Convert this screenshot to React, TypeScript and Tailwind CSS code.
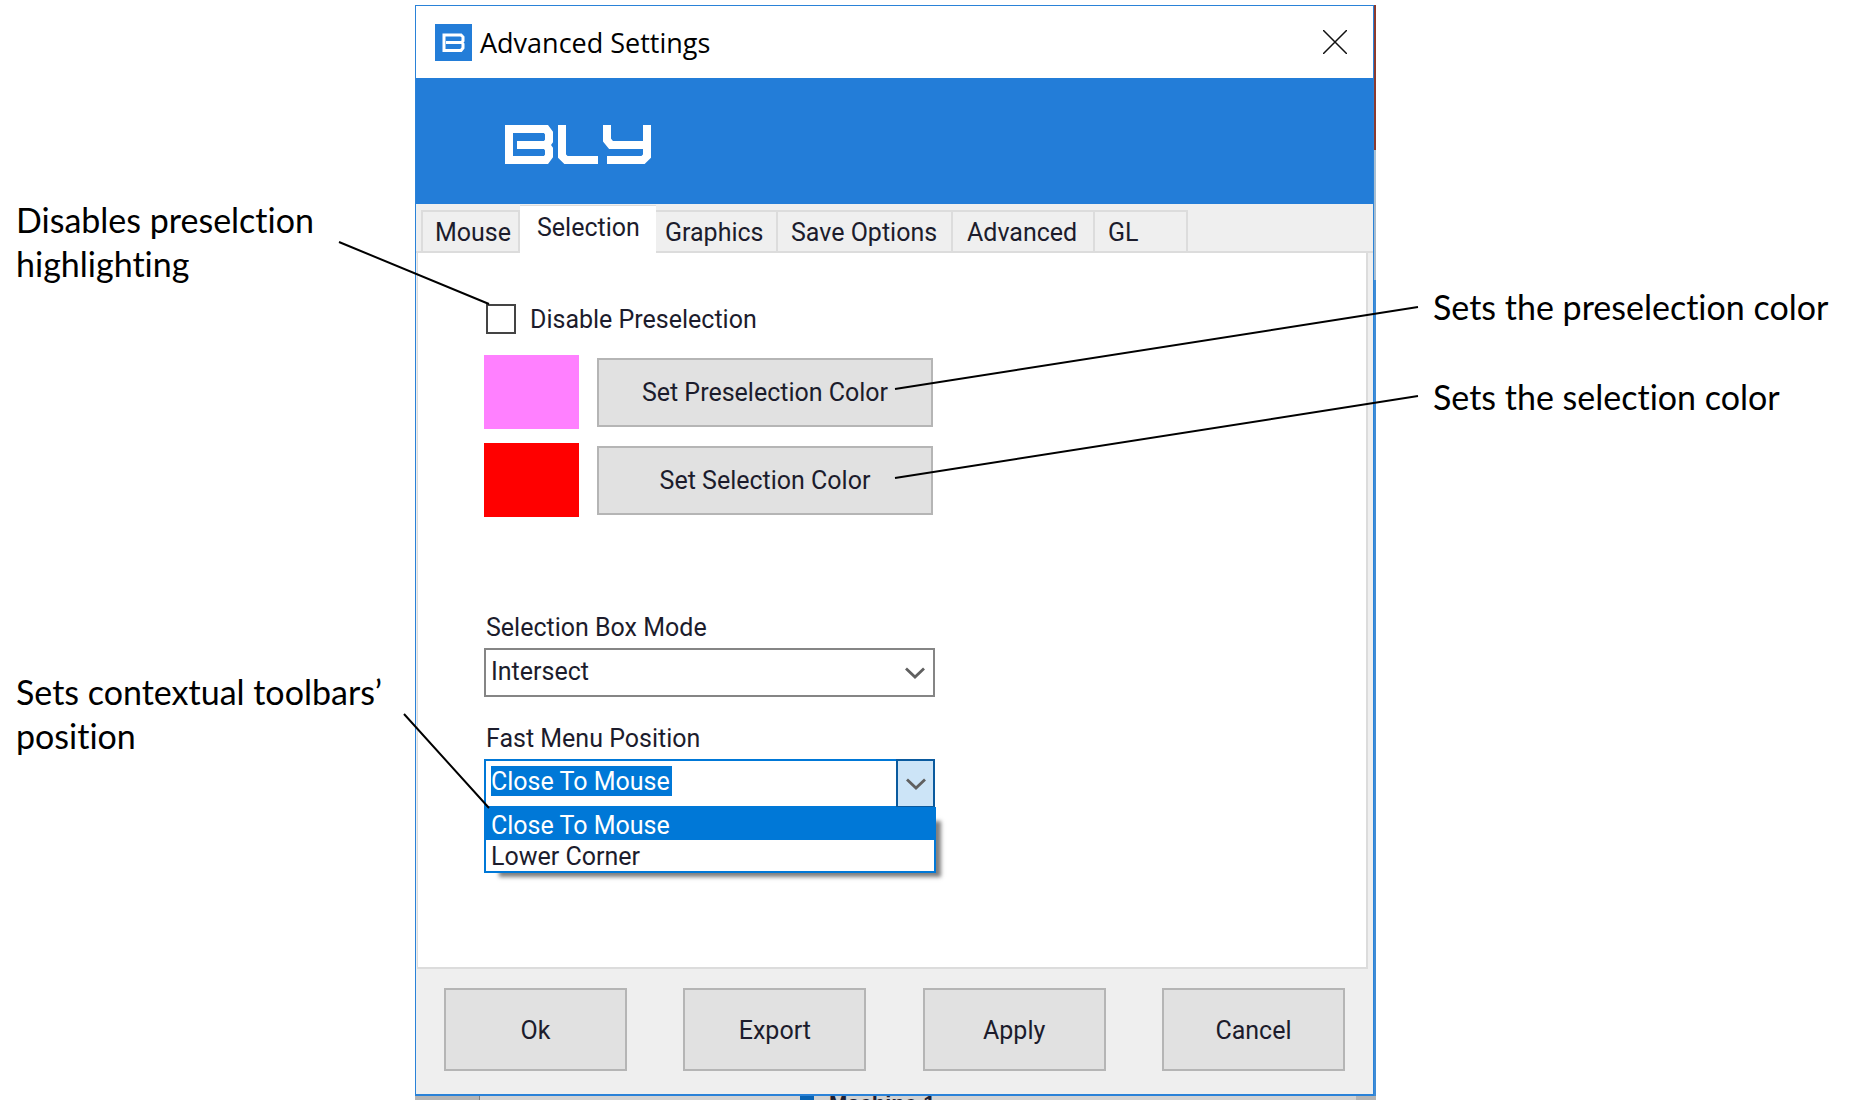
import clsx from "clsx";
import { useState } from "react";

const tabs = [
    { name: "Mouse", width: "w-[99px]", pad: "pl-[12px]" },
    { name: "Selection", width: "w-[136px]", pad: "pl-[17px]" },
    { name: "Graphics", width: "w-[122px]", pad: "pl-[9px]" },
    { name: "Save Options", width: "w-[175px]", pad: "pl-[13px]" },
    { name: "Advanced", width: "w-[142px]", pad: "pl-[14px]" },
    { name: "GL", width: "w-[93px]", pad: "pl-[13px]" },
];

const menuPositions = ["Close To Mouse", "Lower Corner"];

const BlyMark = ({ className }: { className?: string }): JSX.Element => (
    <svg viewBox="0 0 37 37" className={className} aria-hidden="true">
        <rect width="37" height="37" fill="#237dd8" />
        <path
            d="M11 18.500H27M9 11H26L28 13V17L26.500 18.500L28 20V24L26 26.500H9V9.500"
            fill="none"
            stroke="#fff"
            strokeWidth="3"
        />
    </svg>
);

const BlyLogo = ({ className }: { className?: string }): JSX.Element => (
    <svg viewBox="0 0 146 39" className={className} role="img" aria-label="BLY">
        <g fill="none" stroke="#fff" strokeWidth="8">
            <path d="M12 20H44M4 4H41L44 8V16L41 20L44 24V31L41 35H4V0" />
            <path d="M57 0V31L61 35H93" />
            <path d="M102 0V15L106 20H142M142 0V31L138 35H102" />
        </g>
    </svg>
);

const Chevron = ({ className }: { className?: string }): JSX.Element => (
    <svg viewBox="0 0 20 12" className={clsx("w-[20px] h-[12px]", className)} aria-hidden="true">
        <path d="M1 1.500L10 10L19 1.500" fill="none" stroke="#606060" strokeWidth="2.800" />
    </svg>
);

const PushButton = ({ className, label }: { className?: string; label: string }): JSX.Element => (
    <button type="button" className={clsx("border-2 border-[#b5b5b5] bg-[#e1e1e1] text-center pt-[2px]", className)}>
        {label}
    </button>
);

const ColorRow = ({ swatch, label }: { swatch: string; label: string }): JSX.Element => (
    <div className="flex items-center gap-[18px]">
        <div className={clsx("w-[95px] h-[74px]", swatch)} />
        <PushButton className="w-[336px] h-[69px]" label={label} />
    </div>
);

const TabStrip = ({ active, onSelect }: { active: string; onSelect: (name: string) => void }): JSX.Element => (
    <div role="tablist" className="flex items-end h-[49px] pl-[5px] bg-[#efefef] border-b-2 border-[#dcdcdc]">
        {tabs.map(tab => (
            <button
                key={tab.name}
                type="button"
                role="tab"
                aria-selected={tab.name === active}
                onClick={() => onSelect(tab.name)}
                className={clsx(
                    "text-left whitespace-nowrap border-[#dcdcdc]",
                    tab.width,
                    tab.pad,
                    tab.name === active
                        ? "h-[48px] -mb-[2px] pb-[4px] bg-white border-t"
                        : "h-[41px] pt-[2px] border-t-2 border-r-2 first:border-l-2"
                )}
            >
                {tab.name}
            </button>
        ))}
    </div>
);

const SelectionPanel = (): JSX.Element => {
    const [disabled, setDisabled] = useState(false);
    const [mode, setMode] = useState("Intersect");
    const [position, setPosition] = useState(menuPositions[0]);

    return (
        <div className="ml-[1px] mr-[5px] h-[716px] bg-white border-l border-r-2 border-b-2 border-[#dcdcdc] pl-[66px] pt-[50px]">
            <label className="flex items-center gap-[14px] h-[32px] pl-[2px]">
                <input
                    type="checkbox"
                    checked={disabled}
                    onChange={e => setDisabled(e.target.checked)}
                    className="appearance-none w-[30px] h-[30px] border-2 border-[#444444] bg-white checked:bg-[#0078d7]"
                />
                <span className="pt-[2px]">Disable Preselection</span>
            </label>
            <div className="flex flex-col gap-[14px] mt-[20px]">
                <ColorRow swatch="bg-[#ff80ff]" label="Set Preselection Color" />
                <ColorRow swatch="bg-[#ff0000]" label="Set Selection Color" />
            </div>

            <div className="w-[451px] mt-[96px]">
                <label htmlFor="box-mode" className="block h-[35px] pl-[2px]">
                    Selection Box Mode
                </label>
                <div className="relative">
                    <select
                        id="box-mode"
                        value={mode}
                        onChange={e => setMode(e.target.value)}
                        className="appearance-none block w-full h-[49px] border-2 border-[#858585] bg-white pl-[5px] pb-[2px]"
                    >
                        <option>Intersect</option>
                        <option>Contain</option>
                    </select>
                    <Chevron className="absolute right-[10px] top-[19px] pointer-events-none" />
                </div>

                <label htmlFor="menu-position" className="block h-[35px] mt-[27px] pl-[2px]">
                    Fast Menu Position
                </label>
                <div className="relative">
                    <div className="flex h-[49px] border-2 border-[#0078d7]">
                        <div className="flex-grow pl-[5px] pt-[5px]">
                            <input
                                id="menu-position"
                                type="text"
                                role="combobox"
                                aria-expanded="true"
                                aria-controls="menu-position-list"
                                value={position}
                                readOnly
                                className="field-sizing-content block h-[30px] pt-[2px] pr-[2px] bg-[#0078d7] text-white outline-none"
                            />
                        </div>
                        <button
                            type="button"
                            aria-label="Toggle list"
                            className="grid place-items-center w-[39px] -m-[2px] border-2 border-[#0a5a9e] bg-[#cce4f7]"
                        >
                            <Chevron />
                        </button>
                    </div>
                    <ul
                        id="menu-position-list"
                        role="listbox"
                        className="absolute left-0 top-[48px] w-[452px] border-2 border-[#0078d7] bg-white shadow-[10px_9px_4px_-5px_rgba(0,0,0,0.5)]"
                    >
                        {menuPositions.map(item => (
                            <li
                                key={item}
                                role="option"
                                aria-selected={item === position}
                                onClick={() => setPosition(item)}
                                className={clsx(
                                    "h-[31px] leading-[33px] pl-[5px]",
                                    item === position && "bg-[#0078d7] text-white"
                                )}
                            >
                                {item}
                            </li>
                        ))}
                    </ul>
                </div>
            </div>
        </div>
    );
};

const SettingsDialog = (): JSX.Element => {
    const [tab, setTab] = useState("Selection");

    return (
        <section
            aria-label="Advanced Settings"
            className="flex-grow border border-b-2 border-[#2a82d8] bg-[#efefef] font-[Roboto,'Liberation_Sans',sans-serif] text-[25px] leading-[30px] text-[#1c1c2c]"
        >
            <header className="flex items-center h-[72px] pl-[19px] pr-[26px] bg-white">
                <BlyMark className="w-[37px] h-[37px]" />
                <h1 className="ml-[8px] pt-[2px] flex-grow font-['Open_Sans',sans-serif] text-[27px] text-black">
                    Advanced Settings
                </h1>
                <button type="button" aria-label="Close">
                    <svg viewBox="0 0 24 24" className="w-[24px] h-[24px]">
                        <path d="M0 0L24 24M24 0L0 24" stroke="#111" strokeWidth="1.500" />
                    </svg>
                </button>
            </header>
            <div className="h-[126px] bg-[#237dd8] pl-[89px] pt-[47px]">
                <BlyLogo className="w-[146px] h-[39px]" />
            </div>
            <TabStrip active={tab} onSelect={setTab} />
            <SelectionPanel />
            <footer className="flex justify-between pt-[19px] pb-[23px] pl-[28px] pr-[28px]">
                <PushButton className="w-[183px] h-[83px]" label="Ok" />
                <PushButton className="w-[183px] h-[83px]" label="Export" />
                <PushButton className="w-[183px] h-[83px]" label="Apply" />
                <PushButton className="w-[183px] h-[83px]" label="Cancel" />
            </footer>
        </section>
    );
};

// Slivers of the application window that show behind the dialog
const BehindRight = (): JSX.Element => (
    <div className="w-[2px] flex flex-col">
        <div className="h-[145px] bg-[#8b3a2e]" />
        <div className="h-[130px] bg-[#a9bfd2]" />
        <div className="flex-grow bg-[#3f8cd6]" />
    </div>
);

const BehindBottom = (): JSX.Element => (
    <div className="flex h-[4px] overflow-hidden bg-[#d2d2d2] font-['Liberation_Sans',sans-serif] text-[22px] leading-[16px] text-[#202030]">
        <div className="w-[65px] bg-[#b4b4b4] border-r border-[#808080]" />
        <div className="w-[320px]" />
        <div className="w-[14px] bg-[#0a64b4]" />
        <span className="flex-grow pl-[15px] font-bold">Machine 1</span>
        <div className="w-[20px] bg-[#b4b4b4]" />
    </div>
);

export default function App(): JSX.Element {
    return (
        <main className="relative grid grid-cols-[415fr_961fr_483fr] bg-white font-[Lato,sans-serif] text-[34px] leading-[44px] text-black [font-variant-ligatures:none] pb-[4px]">
            <aside className="pl-[16px] pt-[198px]">
                <p>
                    Disables preselction
                    <br />
                    highlighting
                </p>
                <p className="mt-[384px]">
                    Sets contextual toolbars’
                    <br />
                    position
                </p>
            </aside>
            <div className="pt-[5px]">
                <div className="flex">
                    <SettingsDialog />
                    <BehindRight />
                </div>
                <BehindBottom />
            </div>
            <aside className="pl-[57px] pt-[285px] whitespace-nowrap">
                <p>Sets the preselection color</p>
                <p className="mt-[46px]">Sets the selection color</p>
            </aside>
            <svg
                viewBox="0 0 1859 1103"
                className="absolute left-0 top-0 w-full pointer-events-none"
                aria-hidden="true"
            >
                <path
                    d="M339 242L489 304M404 714L489 808M1418 307L895 389M1418 396L895 478"
                    fill="none"
                    stroke="#000"
                    strokeWidth="2"
                />
            </svg>
        </main>
    );
}
